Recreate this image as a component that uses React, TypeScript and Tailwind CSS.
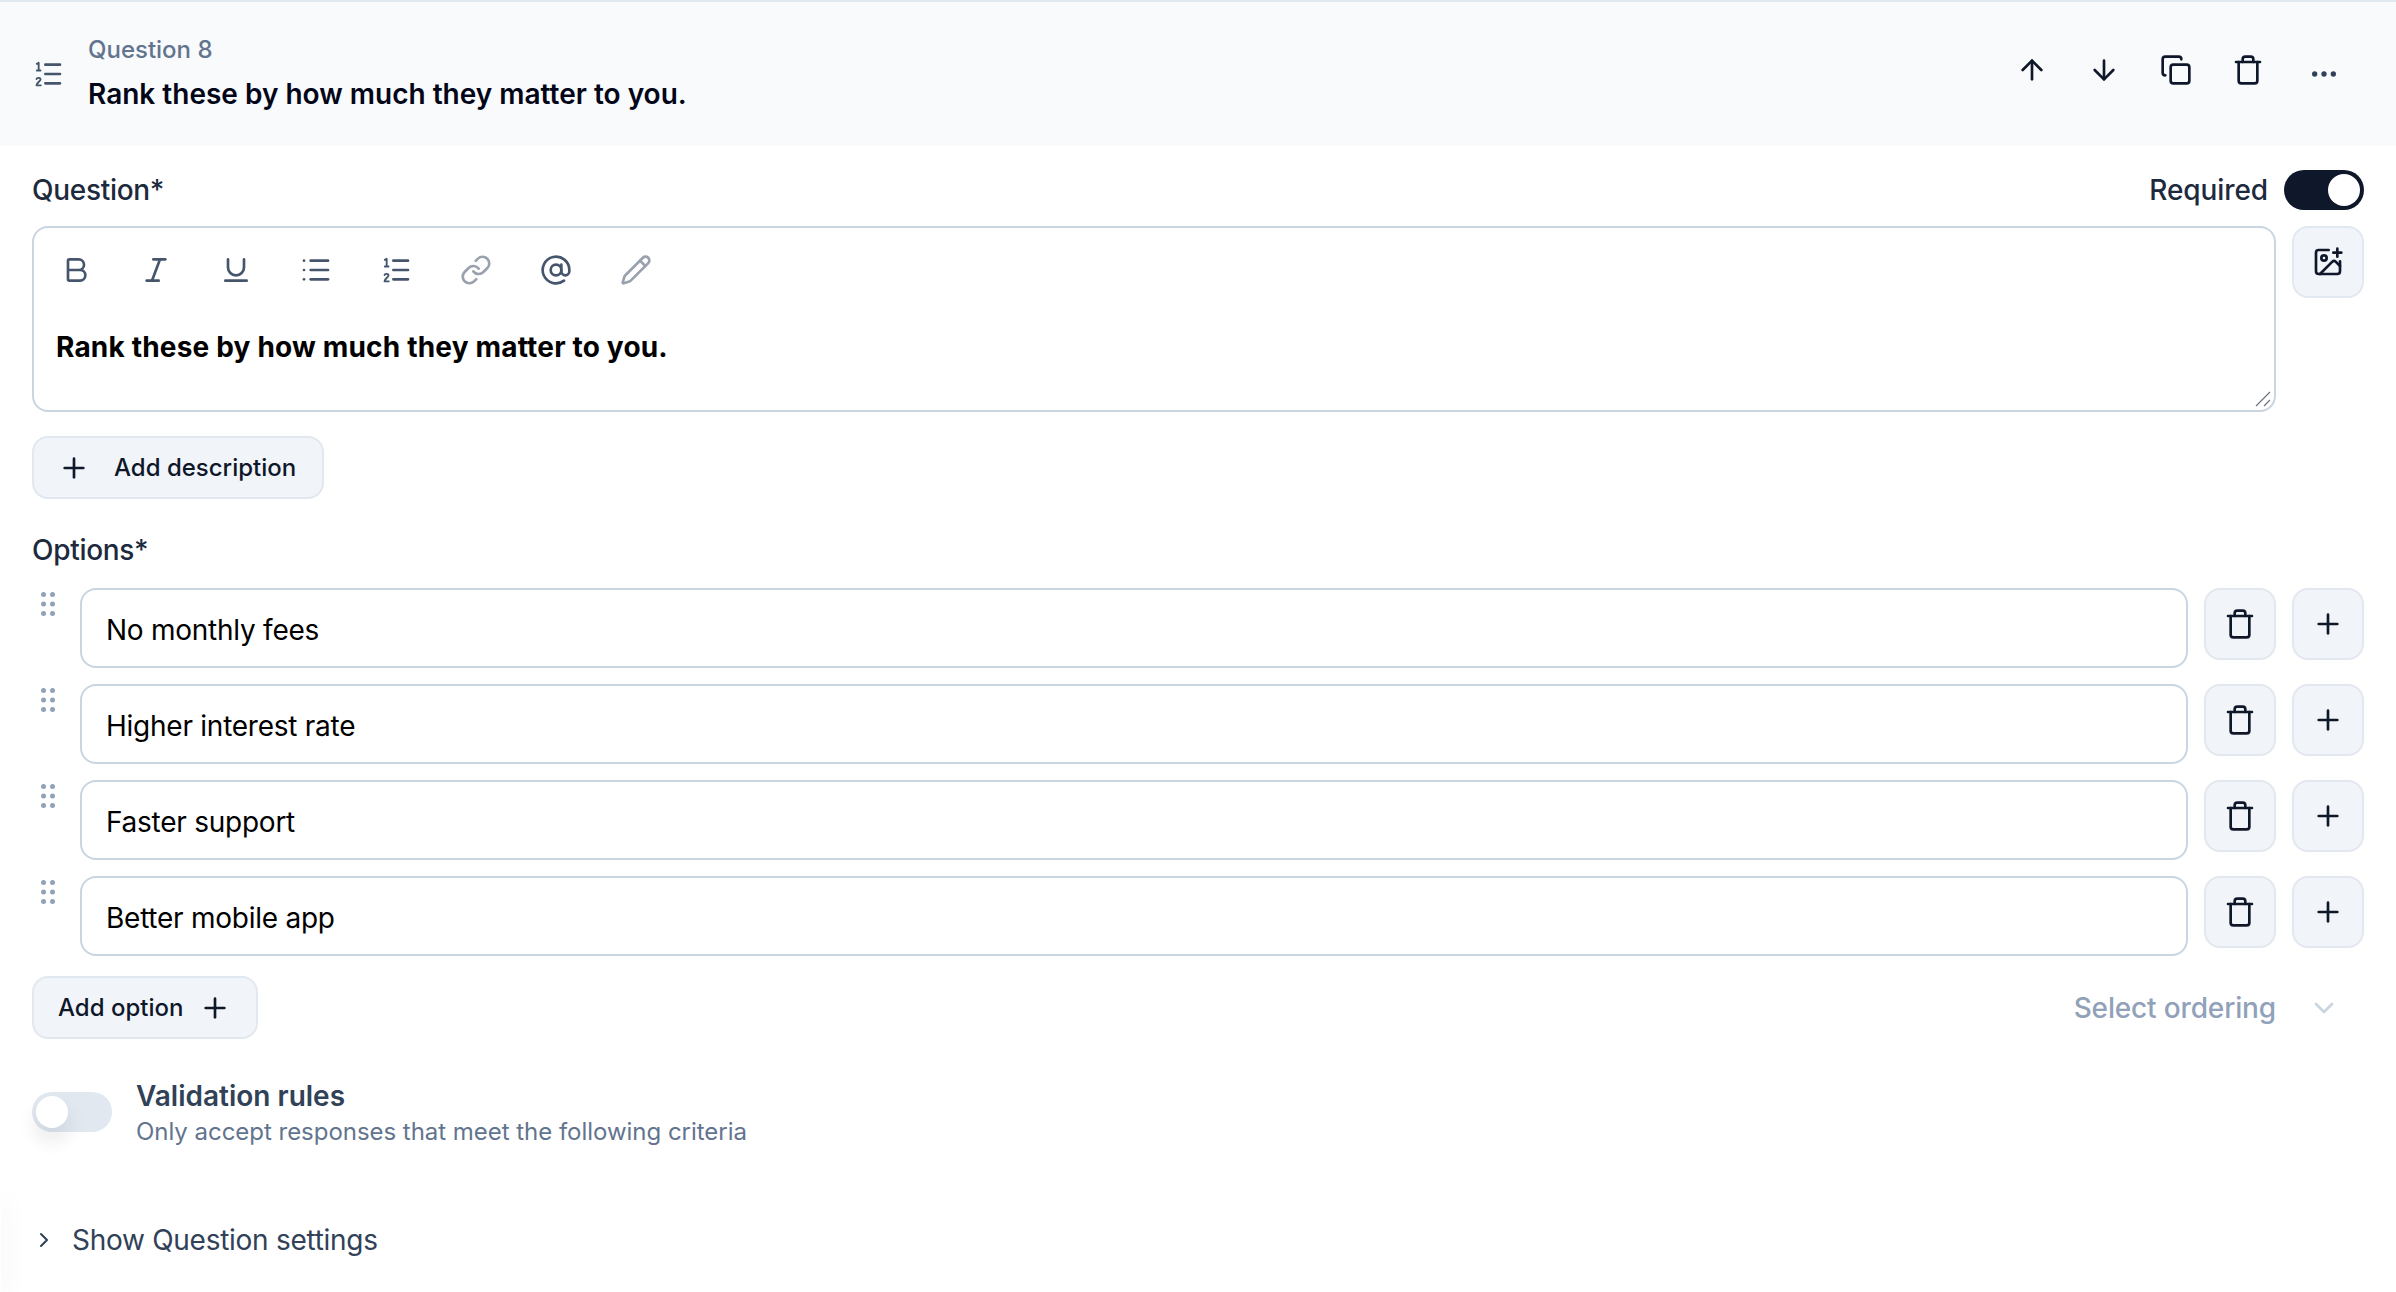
import {
  ArrowDown,
  ArrowUp,
  AtSign,
  Bold,
  ChevronDown,
  ChevronRight,
  Copy,
  ImagePlus,
  Italic,
  Link,
  List,
  MoreHorizontal,
  Pencil,
  Plus,
  Trash,
  Underline,
} from 'lucide-react';

const options = ['No monthly fees', 'Higher interest rate', 'Faster support', 'Better mobile app'];

function RankIcon({ className }: { className?: string }) {
  return (
    <svg width="32" height="32" viewBox="0 0 24 24" fill="none" stroke="currentColor" strokeWidth="2" strokeLinecap="round" strokeLinejoin="round" className={className}>
      <path d="M10 5h11M10 12h11M10 19h11" />
      <path d="M3.6 4.4 5 3.6v5.6M3.6 9.4h2.8" strokeWidth="1.4" />
      <path d="M3.4 15.8c.3-1.3 3-1.3 3 .3 0 1.3-3 2.4-3 4.4h3.2" strokeWidth="1.4" />
    </svg>
  );
}

function DragDots() {
  return (
    <svg width="14" height="24" viewBox="0 0 14 24" className="text-slate-400" fill="currentColor">
      <circle cx="2.5" cy="2.5" r="2.5" />
      <circle cx="11.5" cy="2.5" r="2.5" />
      <circle cx="2.5" cy="12" r="2.5" />
      <circle cx="11.5" cy="12" r="2.5" />
      <circle cx="2.5" cy="21.5" r="2.5" />
      <circle cx="11.5" cy="21.5" r="2.5" />
    </svg>
  );
}

function IconButton({ children }: { children: React.ReactNode }) {
  return (
    <button className="flex h-[72px] w-[72px] shrink-0 items-center justify-center rounded-2xl border-2 border-slate-200 bg-slate-100 text-slate-900">
      {children}
    </button>
  );
}

function Toggle({ on }: { on: boolean }) {
  return (
    <div className={on ? 'flex h-10 w-20 shrink-0 items-center justify-end rounded-full bg-slate-900 p-1' : 'flex h-10 w-20 shrink-0 items-center rounded-full bg-slate-200 p-1'}>
      <div className={on ? 'h-8 w-8 rounded-full bg-white' : 'h-8 w-8 rounded-full bg-white shadow-[0_12px_20px_rgba(15,23,42,0.1)]'} />
    </div>
  );
}

export default function App() {
  const toolbar = [
    { key: 'bold', node: <Bold size={32} />, tone: 'text-slate-600' },
    { key: 'italic', node: <Italic size={32} />, tone: 'text-slate-600' },
    { key: 'underline', node: <Underline size={32} />, tone: 'text-slate-600' },
    { key: 'list', node: <List size={32} />, tone: 'text-slate-600' },
    { key: 'ordered', node: <RankIcon />, tone: 'text-slate-600' },
    { key: 'link', node: <Link size={32} />, tone: 'text-gray-400' },
    { key: 'at', node: <AtSign size={32} />, tone: 'text-slate-600' },
    { key: 'pencil', node: <Pencil size={32} />, tone: 'text-gray-400' },
  ];

  return (
    <div className="relative h-[1292px] w-full overflow-hidden bg-white font-['Inter',sans-serif] text-[28px] text-slate-800">
      {/* Header */}
      <div className="flex h-[146px] items-center justify-between border-t-2 border-slate-200 bg-slate-50 pl-8 pr-8">
        <div className="flex items-center gap-6">
          <RankIcon className="text-slate-600" />
          <div>
            <div className="text-2xl leading-8 font-medium text-slate-500">Question 8</div>
            <div className="mt-2 text-[28px] leading-10 font-semibold text-slate-950">Rank these by how much they matter to you.</div>
          </div>
        </div>
        <div className="mb-2 flex items-center text-slate-900">
          <div className="flex w-[72px] justify-center"><ArrowUp size={32} /></div>
          <div className="flex w-[72px] justify-center"><ArrowDown size={32} /></div>
          <div className="flex w-[72px] justify-center"><Copy size={32} /></div>
          <div className="flex w-[72px] justify-center"><Trash size={32} /></div>
          <div className="mt-2 flex w-20 justify-center text-slate-700"><MoreHorizontal size={32} /></div>
        </div>
      </div>

      <div className="px-8 pt-6">
        {/* Question */}
        <div className="flex h-10 items-center justify-between">
          <div className="font-medium leading-10 tracking-[-0.3px]">Question*</div>
          <div className="flex items-center gap-4">
            <span className="font-medium tracking-[-0.1px]">Required</span>
            <Toggle on />
          </div>
        </div>
        <div className="mt-4 flex items-start gap-4">
          <div className="relative h-[186px] flex-1 rounded-2xl border-2 border-slate-300 pl-[2px]">
            <div className="flex pt-[26px]">
              {toolbar.map((t) => (
                <div key={t.key} className={`flex w-20 justify-center ${t.tone}`}>{t.node}</div>
              ))}
            </div>
            <div className="mt-[41px] pl-5 font-bold leading-10 tracking-[0.18px] text-black">Rank these by how much they matter to you.</div>
            <svg width="16" height="16" viewBox="0 0 16 16" className="absolute bottom-[3px] right-[3px] text-gray-500" stroke="currentColor" strokeWidth="1.2">
              <path d="M1 15 15 1M9 15l6-6" />
            </svg>
          </div>
          <IconButton><ImagePlus size={32} /></IconButton>
        </div>

        <button className="mt-6 flex h-[63px] items-center gap-6 rounded-2xl border-2 border-slate-200 bg-slate-100 pl-6 pr-[26px] text-2xl font-medium text-slate-900">
          <Plus size={32} />
          Add description
        </button>

        {/* Options */}
        <div className="mt-[31px] font-medium leading-10 tracking-[-0.3px]">Options*</div>
        <div className="mt-[18px] flex flex-col gap-4">
          {options.map((o) => (
            <div key={o} className="flex items-start gap-4">
              <div className="flex w-8 shrink-0 justify-center pt-1">
                <DragDots />
              </div>
              <div className="flex h-20 flex-1 items-center rounded-2xl border-2 border-slate-300 pl-6 pt-1 tracking-[-0.25px] text-black">{o}</div>
              <IconButton><Trash size={32} /></IconButton>
              <IconButton><Plus size={32} /></IconButton>
            </div>
          ))}
        </div>

        <div className="mt-5 flex items-center justify-between">
          <button className="flex h-[63px] items-center gap-4 rounded-2xl border-2 border-slate-200 bg-slate-100 pl-6 pr-[25px] text-2xl font-medium text-slate-900">
            Add option
            <Plus size={32} />
          </button>
          <div className="flex items-center">
            <span className="font-medium tracking-[-0.15px] text-slate-400">Select ordering</span>
            <div className="ml-2 flex w-20 justify-center text-slate-300"><ChevronDown size={32} /></div>
          </div>
        </div>

        {/* Validation */}
        <div className="mt-[39px] flex items-start gap-6">
          <div className="mt-[14px]"><Toggle on={false} /></div>
          <div>
            <div className="leading-9 font-semibold text-slate-700">Validation rules</div>
            <div className="text-2xl leading-9 tracking-[-0.03px] text-slate-500">Only accept responses that meet the following criteria</div>
          </div>
        </div>

        <div className="mt-[70px] flex h-10 items-center gap-4 text-slate-700">
          <ChevronRight size={24} />
          <span className="tracking-[-0.28px]">Show Question settings</span>
        </div>
      </div>

      {/* faint shadow bleeding in from the left edge */}
      <div className="absolute left-0 top-[1205px] h-[87px] w-px shadow-[0_0_24px_6px_rgba(15,23,42,0.04)]" />
    </div>
  );
}
